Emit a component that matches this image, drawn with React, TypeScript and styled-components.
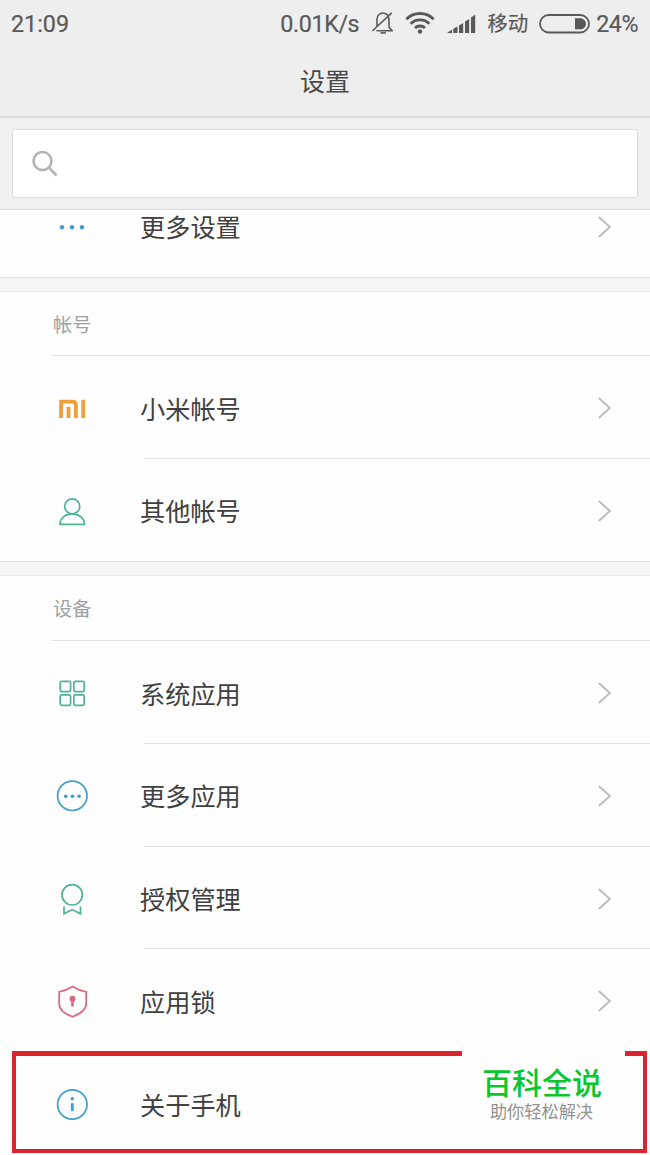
import React from "react";
import styled, { createGlobalStyle } from "styled-components";

const GlobalStyle = createGlobalStyle`
  * { box-sizing: border-box; }
  body {
    margin: 0;
    background: #fefefe;
    font-family: Roboto, "Noto Sans CJK SC", sans-serif;
  }
`;

const Screen = styled.div`
  position: relative;
  width: 650px;
  height: 1155px;
  overflow: hidden;
  display: flex;
  flex-direction: column;
  background: #fefefe;
`;

const Header = styled.header`
  flex: none;
  height: 118px;
  background: #eeeeee;
  border-bottom: 2px solid #dadada;
`;

const StatusBar = styled.div`
  display: flex;
  align-items: center;
  justify-content: space-between;
  height: 47px;
  padding: 0 12px 0 11px;
  line-height: 30px;
  color: #595959;
`;

const StatusGroup = styled.div`
  display: flex;
  align-items: center;
`;

const StatusText = styled.span<{ $gap?: number; $size?: number; $tracking?: number }>`
  margin-left: ${(p) => p.$gap ?? 0}px;
  font-size: ${(p) => p.$size ?? 23.3}px;
  letter-spacing: ${(p) => p.$tracking ?? 0}px;
  line-height: 30px;
  white-space: nowrap;
  -webkit-text-stroke: 0.2px #595959;
`;

const StatusIcon = styled.svg<{ $gap: number }>`
  display: block;
  flex: none;
  margin-left: ${(p) => p.$gap}px;
`;

const Title = styled.h1`
  margin: 0;
  height: 69px;
  padding-top: 1px;
  line-height: 70px;
  font-size: 25px;
  font-weight: 400;
  text-align: center;
  color: #484848;
`;

const SearchArea = styled.div`
  flex: none;
  height: 92px;
  padding: 11px 12px;
  background: #f0f0f0;
  border-bottom: 1px solid #dcdcdc;
`;

const SearchBox = styled.div`
  display: flex;
  align-items: center;
  height: 69px;
  padding-left: 18px;
  background: #fff;
  border: 1px solid #dddddd;
  border-radius: 3px;
`;

const List = styled.main`
  flex: 1;
  min-height: 0;
  overflow: hidden;
`;

const Group = styled.section<{ $scrolled?: boolean }>`
  margin-top: ${(p) => (p.$scrolled ? -35 : 0)}px;
  border-bottom: 1px solid #e0e0e0;
`;

const Divider = styled.div`
  height: 14px;
  background: #f6f6f6;
  border-bottom: 1px solid #ececec;
`;

const GroupTitle = styled.h2<{ $height?: number }>`
  margin: 0 0 0 52px;
  height: ${(p) => p.$height ?? 64}px;
  padding: 1px 0 0 1px;
  line-height: 65px;
  border-bottom: 1px solid #e2e2e2;
  font-size: 19.2px;
  font-weight: 400;
  color: #a0a0a0;
`;

const Row = styled.div<{ $height?: number }>`
  display: flex;
  align-items: center;
  height: ${(p) => p.$height ?? 102.75}px;
  padding: 1.5px 37px 0 52px;
`;

const RowLine = styled.div`
  height: 1px;
  margin: -1px 0 0 144px;
  background: #e2e2e2;
`;

const RowIcon = styled.svg`
  display: block;
  flex: none;
  fill: none;
  stroke-width: 1.7;
`;

const Label = styled.span`
  flex: 1;
  margin-left: 48px;
  padding-top: 5px;
  font-size: 25.2px;
  line-height: 36px;
  color: #404040;
`;

const Highlight = styled.div`
  position: absolute;
  left: 12px;
  top: 1051px;
  width: 635px;
  height: 102px;
  border: 4px solid #dc2430;
  border-top-width: 5px;
`;

const Watermark = styled.div`
  position: absolute;
  left: 462px;
  top: 1049px;
  width: 163px;
  height: 96px;
  padding-top: 16px;
  background: #fefefe;
  text-align: center;
`;

const Brand = styled.div`
  padding-right: 3px;
  font-size: 30px;
  line-height: 38px;
  font-weight: 500;
  color: #08c62e;
`;

const Slogan = styled.div`
  padding-right: 4px;
  font-size: 17.2px;
  line-height: 18px;
  color: #929292;
`;

const GREEN = "#4fb297";
const BLUE = "#3f9fca";

type IconName = "dots" | "mi" | "user" | "apps" | "more" | "badge" | "lock" | "info";

/* Every glyph is centred on (20, 20) of a 40px box. */
const glyphs: Record<IconName, React.ReactNode> = {
  dots: (
    <g fill={BLUE}>
      <circle cx="10" cy="20.3" r="2.2" />
      <circle cx="20" cy="20.3" r="2.2" />
      <circle cx="30" cy="20.3" r="2.2" />
    </g>
  ),
  mi: (
    <g stroke="#ee9f3c" strokeWidth="3.8">
      <path d="M9.1 30V13.6H20.8Q23.9 13.6 23.9 17.2V30" />
      <path d="M16.5 30V18.8M31.2 30V11.7" />
    </g>
  ),
  user: (
    <g stroke={GREEN}>
      <circle cx="20.2" cy="15.4" r="7.5" />
      <path d="M8 33.3C8 27.200 13 22.900 20.200 22.900S32.400 27.200 32.400 33.300Z" />
    </g>
  ),
  apps: (
    <g stroke={GREEN}>
      <rect x="8.2" y="8.3" width="10.4" height="10.4" rx="1.5" />
      <rect x="21.8" y="8.3" width="10.4" height="10.4" rx="1.5" />
      <rect x="8.2" y="21.9" width="10.4" height="10.4" rx="1.5" />
      <rect x="21.8" y="21.9" width="10.4" height="10.4" rx="1.5" />
    </g>
  ),
  more: (
    <g>
      <circle cx="20.3" cy="19.8" r="14.7" stroke={BLUE} />
      <g fill={BLUE}>
        <circle cx="13.7" cy="20.3" r="1.8" />
        <circle cx="20.4" cy="20.3" r="1.8" />
        <circle cx="27.1" cy="20.3" r="1.8" />
      </g>
    </g>
  ),
  badge: (
    <g stroke={GREEN}>
      <circle cx="20.2" cy="15.8" r="10.2" />
      <path d="M12 27.5V34.8L20.2 30.6L28.5 34.8V27.5" />
    </g>
  ),
  lock: (
    <g stroke="#da6881">
      <path d="M20.5 5.5Q27 9.7 34.2 10.8V22.5C34.2 29 27.5 33.2 20.5 35.8C13.5 33.2 7.2 29 7.2 22.5V10.8Q14 9.7 20.5 5.5Z" />
      <circle cx="20.5" cy="17.8" r="3" fill="#da6881" stroke="none" />
      <path d="M20.5 18V25.5" strokeWidth="2.6" />
    </g>
  ),
  info: (
    <g stroke={BLUE}>
      <circle cx="20.3" cy="20.5" r="14.7" />
      <circle cx="20.3" cy="14.7" r="1.7" fill={BLUE} stroke="none" />
      <path d="M20.3 19.2V27" strokeWidth="2.8" />
    </g>
  ),
};

function SettingRow({ icon, label, height }: { icon: IconName; label: string; height?: number }) {
  return (
    <Row $height={height}>
      <RowIcon width="40" height="40" viewBox="0 0 40 40">{glyphs[icon]}</RowIcon>
      <Label>{label}</Label>
      <RowIcon width="16" height="24" viewBox="0 0 16 24">
        <path d="M1.8 2L12.8 12L1.8 22" stroke="#bdbdbd" strokeWidth="2" />
      </RowIcon>
    </Row>
  );
}

function Status() {
  return (
    <StatusBar>
      <StatusText>21:09</StatusText>
      <StatusGroup>
        <StatusText $tracking={-0.4}>0.01K/s</StatusText>
        <StatusIcon $gap={12} width="22" height="24" viewBox="0 0 22 24" fill="none" stroke="#595959" strokeWidth="1.6">
          <path d="M5.500 18.700H21L18 15.300V7A6 6 0 0 0 6 7V14M1.300 19L20.700 0.800" />
          <path d="M9.500 20.900H15" strokeWidth="1.6" />
        </StatusIcon>
        <StatusIcon $gap={12} width="30" height="24" viewBox="0 0 30 24" fill="none" stroke="#595959" strokeWidth="2.8">
          <path d="M1.3 7.2A19.3 19.3 0 0 1 28.7 7.2M5.6 11.7A13.3 13.3 0 0 1 24.4 11.7M10 16A7.2 7.2 0 0 1 20 16" />
          <circle cx="15" cy="19.5" r="2.2" fill="#595959" stroke="none" />
        </StatusIcon>
        <StatusIcon $gap={12} width="29" height="24" viewBox="0 0 29 24" fill="#595959">
          <path d="M0 21L5 17.5V21ZM6.3 16.8L10.5 14.5V21H6.3ZM12 13.5L16.2 11V21H12ZM18 9.5L22.2 7V21H18ZM24 5.5L28.2 2.5V21H24Z" />
        </StatusIcon>
        <StatusText $gap={11} $size={20.5}>移动</StatusText>
        <StatusIcon $gap={11} width="51" height="20" viewBox="0 0 51 20">
          <rect x="1" y="1" width="49" height="17.5" rx="8.75" fill="none" stroke="#595959" strokeWidth="1.8" />
          <path d="M36 4.3H41.5A5.5 5.5 0 0 1 41.5 15.3H36Z" fill="#595959" />
        </StatusIcon>
        <StatusText $gap={6} $tracking={-0.5}>24%</StatusText>
      </StatusGroup>
    </StatusBar>
  );
}

export default function App() {
  return (
    <Screen>
      <GlobalStyle />
      <Header>
        <Status />
        <Title>设置</Title>
      </Header>
      <SearchArea>
        <SearchBox>
          <RowIcon width="30" height="30" viewBox="0 0 30 30" stroke="#b4b4b4">
            <circle cx="11.5" cy="12" r="9" strokeWidth="2.6" />
            <path d="M17.8 18.5L25.5 26.5" strokeWidth="2.8" />
          </RowIcon>
        </SearchBox>
      </SearchArea>
      <List>
        <Group $scrolled>
          <SettingRow icon="dots" label="更多设置" height={102} />
        </Group>
        <Divider />
        <Group>
          <GroupTitle>帐号</GroupTitle>
          <SettingRow icon="mi" label="小米帐号" />
          <RowLine />
          <SettingRow icon="user" label="其他帐号" height={102.25} />
        </Group>
        <Divider />
        <Group>
          <GroupTitle $height={65}>设备</GroupTitle>
          <SettingRow icon="apps" label="系统应用" />
          <RowLine />
          <SettingRow icon="more" label="更多应用" />
          <RowLine />
          <SettingRow icon="badge" label="授权管理" />
          <RowLine />
          <SettingRow icon="lock" label="应用锁" />
          <SettingRow icon="info" label="关于手机" />
        </Group>
      </List>
      <Highlight />
      <Watermark>
        <Brand>百科全说</Brand>
        <Slogan>助你轻松解决</Slogan>
      </Watermark>
    </Screen>
  );
}
